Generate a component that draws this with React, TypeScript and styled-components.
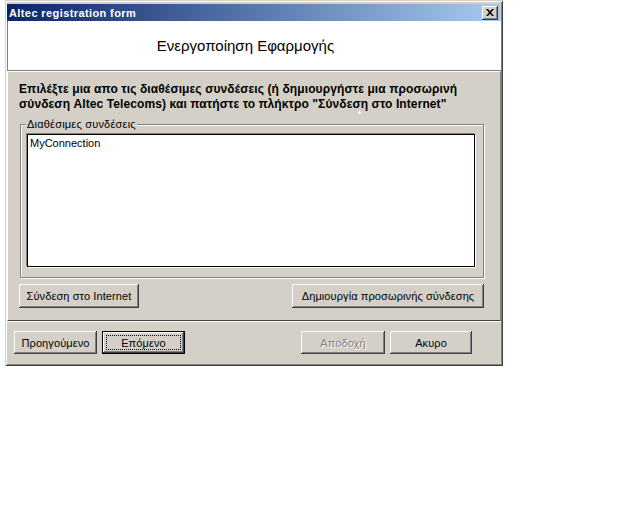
import styled, { createGlobalStyle } from 'styled-components';

const GlobalStyle = createGlobalStyle`
  html, body { margin: 0; padding: 0; background: #ffffff; }
  body {
    font-family: "Liberation Sans", Arial, sans-serif;
    font-size: 11px;
    color: #000000;
  }
  * { box-sizing: border-box; }
`;

const Window = styled.div`
  margin-left: 5px;
  width: 498px;
  height: 366px;
  padding: 4px 2px 2px 2px;
  background: #d4d0c8;
  box-shadow: inset 1px 1px #d4d0c8, inset -1px -1px #404040,
    inset 2px 2px #ffffff, inset -2px -2px #808080;
  display: flex;
  flex-direction: column;
`;

const TitleBar = styled.div`
  height: 17px;
  flex: none;
  margin-right: 1px;
  padding: 0 2px 0 2px;
  display: flex;
  align-items: center;
  justify-content: space-between;
  background: linear-gradient(to right, #0a246a, #a6caf0);
  color: #ffffff;
  font-weight: bold;
  font-size: 11px;
  letter-spacing: 0.4px;
`;

const CloseButton = styled.div`
  width: 16px;
  height: 14px;
  background: #d4d0c8;
  box-shadow: inset -1px -1px #404040, inset 1px 1px #ffffff,
    inset -2px -2px #808080;
  display: flex;
  align-items: center;
  justify-content: center;
`;

const Header = styled.div`
  height: 50px;
  flex: none;
  background: #ffffff;
  border-left: 1px solid #808080;
  border-bottom: 1px solid #808080;
  display: flex;
  align-items: center;
  justify-content: center;
  padding-right: 18px;
  font-size: 15px;
`;

const Panel = styled.div`
  position: relative;
  height: 250px;
  flex: none;
  border-top: 1px solid #ffffff;
  border-left: 1px solid #ffffff;
  border-right: 1px solid #808080;
  border-bottom: 1px solid #404040;
  padding: 10px 16px 0 11px;
  display: flex;
  flex-direction: column;
`;

const Intro = styled.p`
  margin: 0;
  font-weight: bold;
  font-size: 12px;
  letter-spacing: 0.1px;
  line-height: 15px;
  white-space: nowrap;
`;

const Speck = styled.span`
  position: absolute;
  left: 350px;
  top: 39px;
  width: 3px;
  height: 3px;
  border-radius: 50%;
  background: #ffffff;
`;

const GroupBox = styled.div`
  position: relative;
  margin: 12px 0 0 1px;
  height: 154px;
  border: 1px solid #808080;
  box-shadow: inset 1px 1px #ffffff, 1px 1px #ffffff;
  padding: 9px 8px 10px 6px;
  display: flex;
`;

const Legend = styled.span`
  position: absolute;
  left: 5px;
  top: -7px;
  padding: 0 1px;
  background: #d4d0c8;
  line-height: 13px;
  letter-spacing: 0.2px;
`;

const ListBox = styled.div`
  flex: 1;
  background: #ffffff;
  border: 1px solid #000000;
  box-shadow: -1px -1px #808080, 1px 1px #ffffff;
  padding: 2px 2px;
  line-height: 13px;
`;

const ActionRow = styled.div`
  margin-top: 6px;
  display: flex;
  justify-content: space-between;
`;

const Button = styled.div<{ $w: number; $h?: number; $default?: boolean; $disabled?: boolean }>`
  position: relative;
  width: ${p => p.$w}px;
  height: ${p => p.$h ?? 24}px;
  background: #d4d0c8;
  display: flex;
  align-items: center;
  justify-content: center;
  font-size: 11px;
  letter-spacing: 0.1px;
  color: ${p => (p.$disabled ? '#808080' : '#000000')};
  text-shadow: ${p => (p.$disabled ? '1px 1px #ffffff' : 'none')};
  border: ${p => (p.$default ? '1px solid #000000' : 'none')};
  box-shadow: inset -1px -1px #404040, inset 1px 1px #ffffff,
    inset -2px -2px #808080;
`;

const FocusRing = styled.span`
  position: absolute;
  inset: 3px;
  border: 1px dotted #000000;
`;

const Footer = styled.div`
  flex: 1;
  border-top: 1px solid #ffffff;
  padding: 9px 29px 0 7px;
  display: flex;
  align-items: flex-start;
  gap: 5px;
`;

const Spacer = styled.div`
  flex: 1;
`;

export default function App() {
  return (
    <>
      <GlobalStyle />
      <Window>
        <TitleBar>
          <span>Altec registration form</span>
          <CloseButton>
            <svg width="8" height="7" viewBox="0 0 8 7">
              <path d="M0 0h2l2 2.2L6 0h2L5 3.5 8 7H6L4 4.8 2 7H0l3-3.5z" fill="#000" />
            </svg>
          </CloseButton>
        </TitleBar>
        <Header>Ενεργοποίηση Εφαρμογής</Header>
        <Panel>
          <Intro>
            Επιλέξτε μια απο τις διαθέσιμες συνδέσεις (ή δημιουργήστε μια προσωρινή
            <br />
            σύνδεση Altec Telecoms) και πατήστε το πλήκτρο "Σύνδεση στο Internet"
          </Intro>
          <Speck />
          <GroupBox>
            <Legend>Διαθέσιμες συνδέσεις</Legend>
            <ListBox>MyConnection</ListBox>
          </GroupBox>
          <ActionRow>
            <Button $w={120}>Σύνδεση στο Internet</Button>
            <Button $w={192}>Δημιουργία προσωρινής σύνδεσης</Button>
          </ActionRow>
        </Panel>
        <Footer>
          <Button $w={83} $h={23}>Προηγούμενο</Button>
          <Button $w={83} $h={23} $default>
            Επόμενο
            <FocusRing />
          </Button>
          <Spacer />
          <Button $w={84} $h={23} $disabled>Αποδοχή</Button>
          <Button $w={82} $h={23}>Ακυρο</Button>
        </Footer>
      </Window>
    </>
  );
}
